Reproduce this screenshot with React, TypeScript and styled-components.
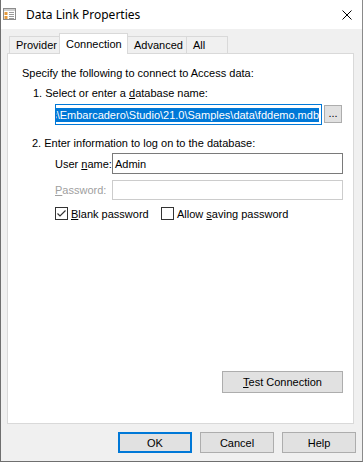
import React from 'react'
import styled, { createGlobalStyle } from 'styled-components'

const GlobalStyle = createGlobalStyle`
  html, body {
    margin: 0;
    padding: 0;
    background: #f0f0f0;
  }
  * {
    box-sizing: border-box;
  }
`

const Window = styled.div`
  width: 363px;
  height: 462px;
  display: flex;
  flex-direction: column;
  background: #f0f0f0;
  border-left: 1px solid #6f6f6f;
  border-right: 1px solid #8a8a8a;
  border-bottom: 1px solid #6f6f6f;
  font-family: 'Liberation Sans', Arial, sans-serif;
  font-size: 11px;
  color: #000;
`

const TitleBar = styled.div`
  height: 29px;
  flex: 0 0 29px;
  background: #fff;
  display: flex;
  align-items: center;
  padding: 0 10px 0 2px;
`

const TitleText = styled.div`
  flex: 1;
  margin-left: 9px;
  font-family: 'Segoe UI', 'Noto Sans', sans-serif;
  font-size: 12px;
  color: #000;
`

const TabStrip = styled.div`
  display: flex;
  align-items: flex-end;
  height: 20px;
  margin: 4px 0 0 8px;
  position: relative;
  z-index: 1;
`

const Tab = styled.div<{ $w: number; $active?: boolean }>`
  width: ${(p) => p.$w}px;
  height: ${(p) => (p.$active ? 21 : 17)}px;
  margin-right: -1px;
  margin-bottom: ${(p) => (p.$active ? -1 : 0)}px;
  border: 1px solid #d9d9d9;
  border-bottom: none;
  background: ${(p) => (p.$active ? '#fff' : '#f0f0f0')};
  display: flex;
  align-items: center;
  padding-left: 6px;
  position: relative;
  z-index: ${(p) => (p.$active ? 2 : 1)};
`

const Panel = styled.div`
  height: 371px;
  margin: 0 8px 0 6px;
  background: #fff;
  border: 1px solid #d9d9d9;
  display: flex;
  flex-direction: column;
  padding: 0 10px 30px 14px;
`

const Line = styled.div<{ $top: number; $indent?: number }>`
  height: 13px;
  line-height: 13px;
  margin-top: ${(p) => p.$top}px;
  margin-left: ${(p) => p.$indent ?? 0}px;
  white-space: nowrap;
`

const Mn = styled.span`
  text-decoration: underline;
  text-underline-offset: 1px;
`

const DbRow = styled.div`
  display: flex;
  align-items: flex-start;
  margin: 4px 0 0 33px;
  height: 21px;
`

const DbInput = styled.div`
  width: 267px;
  height: 21px;
  border: 1px solid #0078d7;
  display: flex;
  justify-content: flex-end;
  align-items: center;
  overflow: hidden;
  padding: 0 2px 0 1px;
`

const Selected = styled.span`
  background: #0078d7;
  color: #fff;
  white-space: nowrap;
  line-height: 14px;
  height: 14px;
  flex-shrink: 0;
`

const SmallButton = styled.div`
  width: 18px;
  height: 18px;
  margin: 1px 0 0 2px;
  border: 1px solid #adadad;
  background: #e1e1e1;
  display: flex;
  align-items: center;
  justify-content: center;
  line-height: 1;
  padding-bottom: 2px;
`

const FieldRow = styled.div<{ $top: number; $h: number }>`
  display: flex;
  align-items: center;
  height: ${(p) => p.$h}px;
  margin: ${(p) => p.$top}px 0 0 33px;
`

const FieldLabel = styled.div<{ $disabled?: boolean }>`
  width: 57px;
  color: ${(p) => (p.$disabled ? '#a0a0a0' : '#000')};
  white-space: nowrap;
`

const TextBox = styled.div<{ $disabled?: boolean }>`
  flex: 1;
  height: 100%;
  border: 1px solid ${(p) => (p.$disabled ? '#cccccc' : '#7a7a7a')};
  background: #fff;
  display: flex;
  align-items: center;
  padding-left: 2px;
`

const CheckRow = styled.div`
  display: flex;
  align-items: center;
  height: 13px;
  margin: 7px 0 0 33px;
`

const CheckItem = styled.label<{ $w?: number }>`
  display: flex;
  align-items: center;
  width: ${(p) => (p.$w ? `${p.$w}px` : 'auto')};
  white-space: nowrap;
`

const Box = styled.span`
  width: 13px;
  height: 13px;
  border: 1px solid #333;
  background: #fff;
  margin-right: 3px;
  display: flex;
  align-items: center;
  justify-content: center;
`

const Spacer = styled.div`
  flex: 1;
`

const PushButton = styled.div<{ $w: number; $h?: number; $default?: boolean }>`
  width: ${(p) => p.$w}px;
  height: ${(p) => p.$h ?? 21}px;
  background: #e1e1e1;
  border: ${(p) => (p.$default ? '2px solid #0078d7' : '1px solid #adadad')};
  display: flex;
  align-items: center;
  justify-content: center;
  white-space: nowrap;
`

const TestRow = styled.div`
  display: flex;
  justify-content: flex-end;
`

const ButtonBar = styled.div`
  display: flex;
  justify-content: flex-end;
  gap: 8px;
  margin-top: 8px;
  padding-right: 6px;
`

const AppIcon = () => (
  <svg width="14" height="13" viewBox="0 0 14 13">
    <rect x="0.5" y="0.5" width="12" height="11" fill="#fff" stroke="#8c8c8c" />
    <rect x="1" y="1" width="11" height="2" fill="#cfcfcf" />
    <rect x="1.5" y="4" width="3" height="3" fill="#e59a3c" />
    <rect x="1.5" y="8" width="3" height="3" fill="#e59a3c" />
    <path d="M6 4.5h5M6 6.5h5M6 8.5h5M6 10.5h5" stroke="#9a9a9a" strokeWidth="1" />
  </svg>
)

const CloseIcon = () => (
  <svg width="10" height="10" viewBox="0 0 10 10">
    <path d="M0.5 0.5L9.5 9.5M9.5 0.5L0.5 9.5" stroke="#000" strokeWidth="1" />
  </svg>
)

const Check = () => (
  <svg width="11" height="11" viewBox="0 0 11 11">
    <path d="M1.5 5.5L4 8L9.5 2.5" stroke="#333" strokeWidth="1.2" fill="none" />
  </svg>
)

export default function App() {
  return (
    <Window>
      <GlobalStyle />
      <TitleBar>
        <AppIcon />
        <TitleText>Data Link Properties</TitleText>
        <CloseIcon />
      </TitleBar>
      <TabStrip>
        <Tab $w={51}>Provider</Tab>
        <Tab $w={69} $active>
          Connection
        </Tab>
        <Tab $w={60}>Advanced</Tab>
        <Tab $w={42}>All</Tab>
      </TabStrip>
      <Panel>
        <Line $top={13}>Specify the following to connect to Access data:</Line>
        <Line $top={7} $indent={11}>
          1. Select or enter a <Mn>d</Mn>atabase name:
        </Line>
        <DbRow>
          <DbInput>
            <Selected>
              C:\Users\Public\Documents\Embarcadero\Studio\21.0\Samples\data\fddemo.mdb
            </Selected>
          </DbInput>
          <SmallButton>...</SmallButton>
        </DbRow>
        <Line $top={12} $indent={10}>
          2. Enter information to log on to the database:
        </Line>
        <FieldRow $top={3} $h={21}>
          <FieldLabel>
            User <Mn>n</Mn>ame:
          </FieldLabel>
          <TextBox>Admin</TextBox>
        </FieldRow>
        <FieldRow $top={6} $h={20}>
          <FieldLabel $disabled>
            <Mn>P</Mn>assword:
          </FieldLabel>
          <TextBox $disabled />
        </FieldRow>
        <CheckRow>
          <CheckItem $w={106}>
            <Box>
              <Check />
            </Box>
            <span>
              <Mn>B</Mn>lank password
            </span>
          </CheckItem>
          <CheckItem>
            <Box />
            <span>
              Allow <Mn>s</Mn>aving password
            </span>
          </CheckItem>
        </CheckRow>
        <Spacer />
        <TestRow>
          <PushButton $w={121} $h={22}>
            <span>
              <Mn>T</Mn>est Connection
            </span>
          </PushButton>
        </TestRow>
      </Panel>
      <ButtonBar>
        <PushButton $w={74} $default>
          OK
        </PushButton>
        <PushButton $w={74}>Cancel</PushButton>
        <PushButton $w={74}>Help</PushButton>
      </ButtonBar>
    </Window>
  )
}
